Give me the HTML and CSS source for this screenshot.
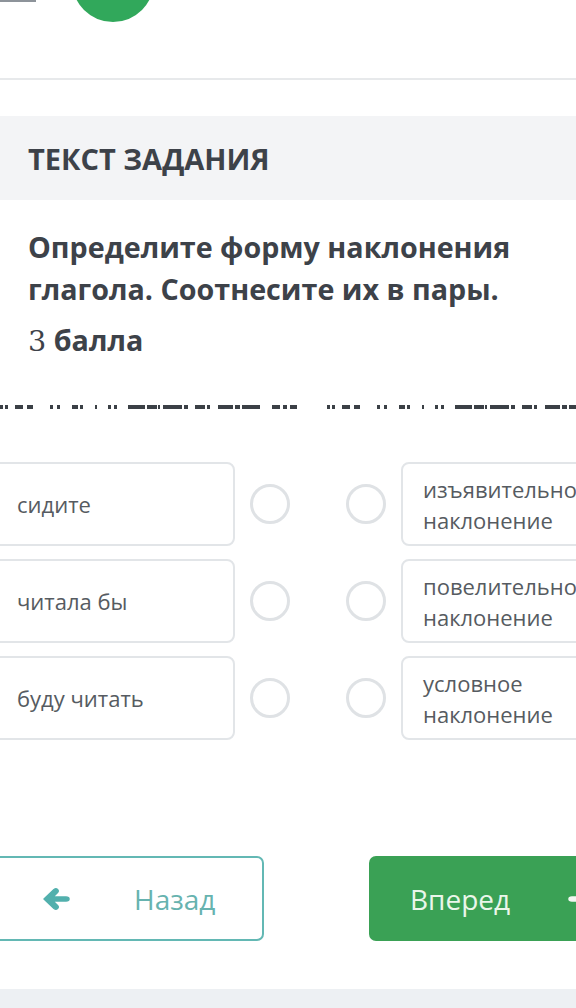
FILE: index.html
```html
<!DOCTYPE html>
<html lang="ru">
<head>
    <meta charset="UTF-8">
    <meta name="viewport" content="width=device-width, initial-scale=1.0">
    <title>Текст задания</title>
    <link rel="stylesheet" href="styles.css">
</head>
<body>
    <div class="topbar">
        <div class="back-stub"></div>
        <div class="avatar"></div>
    </div>

    <div class="task-head">ТЕКСТ ЗАДАНИЯ</div>

    <div class="task-body">
        <p class="question">Определите форму наклонения глагола. Соотнесите их в пары.</p>
        <p class="score"><span class="num">3</span> балла</p>
    </div>

    <!-- clipped line of the previous text, only the bottoms of letters are visible -->
    <svg class="cutline" width="576" height="5" viewBox="0 0 576 5">
        <g id="cut" fill="#3b4046">
            <rect x="0" y="0" width="3" height="4"/>
            <rect x="5" y="0" width="3" height="4"/>
            <rect x="15" y="0" width="8" height="4"/>
            <rect x="27" y="0" width="6" height="4"/>
            <rect x="50" y="0" width="3" height="4"/>
            <rect x="57" y="0" width="3" height="4"/>
            <rect x="72" y="0" width="6" height="4"/>
            <rect x="80" y="0" width="3" height="4"/>
            <rect x="95" y="0" width="2" height="4"/>
            <rect x="108" y="0" width="3" height="4"/>
            <rect x="114" y="0" width="3" height="4"/>
            <rect x="128" y="0" width="17" height="4"/>
            <rect x="147" y="0" width="10" height="4"/>
            <rect x="158" y="0" width="2" height="4"/>
            <rect x="163" y="0" width="19" height="4"/>
            <rect x="184" y="0" width="4" height="4"/>
            <rect x="195" y="0" width="10" height="4"/>
            <rect x="207" y="0" width="3" height="4"/>
            <rect x="218" y="0" width="15" height="4"/>
            <rect x="235" y="0" width="5" height="4"/>
            <rect x="242" y="0" width="18" height="4"/>
            <rect x="272" y="0" width="8" height="4"/>
            <rect x="283" y="0" width="4" height="4"/>
            <rect x="290" y="0" width="7" height="4"/>
        </g>
        <use href="#cut" x="327"/>
    </svg>

    <div class="match">
        <div class="match-row">
            <div class="card left">сидите</div>
            <span class="dot"></span>
            <span class="dot far"></span>
            <div class="card right"><span class="answer">изъявительное наклонение</span></div>
        </div>
        <div class="match-row">
            <div class="card left">читала бы</div>
            <span class="dot"></span>
            <span class="dot far"></span>
            <div class="card right"><span class="answer">повелительное наклонение</span></div>
        </div>
        <div class="match-row">
            <div class="card left">буду читать</div>
            <span class="dot"></span>
            <span class="dot far"></span>
            <div class="card right"><span class="answer">условное наклонение</span></div>
        </div>
    </div>

    <div class="nav">
        <button class="btn btn-back">
            <svg class="arrow" width="30" height="24" viewBox="0 0 30 24">
                <path d="M3 12 L13 2.5 Q15 1 16.5 2.5 Q18 4 16.5 5.5 L12 10 H25 Q28 10 28 12 Q28 14 25 14 H12 L16.5 18.5 Q18 20 16.5 21.5 Q15 23 13 21.5 Z" fill="#52b0ad" stroke="#52b0ad" stroke-width="1.5" stroke-linejoin="round"/>
            </svg>
            <span>Назад</span>
        </button>
        <button class="btn btn-next">
            <span>Вперед</span>
            <svg class="arrow" width="30" height="24" viewBox="0 0 30 24">
                <path d="M27 12 L17 2.5 Q15 1 13.5 2.5 Q12 4 13.5 5.5 L18 10 H5 Q2 10 2 12 Q2 14 5 14 H18 L13.5 18.5 Q12 20 13.5 21.5 Q15 23 17 21.5 Z" fill="#f2f7f2" stroke="#f2f7f2" stroke-width="1.5" stroke-linejoin="round"/>
            </svg>
        </button>
    </div>

    <div class="footer"></div>
</body>
</html>
```

FILE: styles.css
```css
body {
    margin: 0;
    width: 576px;
    height: 1008px;
    overflow: hidden;
    background-color: #fff;
    font-family: "Open Sans", "Noto Sans", sans-serif;
    color: #3d4249;
}

.topbar {
    height: 78px;
    display: flex;
    align-items: flex-start;
    border-bottom: 2px solid #e7e9eb;
}

.back-stub {
    width: 36px;
    height: 2px;
    background-color: #8d939a;
}

.avatar {
    width: 82px;
    height: 82px;
    margin-top: -60px;
    margin-left: 36px;
    border-radius: 50%;
    background-color: #31a85b;
}

.task-head {
    margin-top: 36px;
    height: 84px;
    display: flex;
    align-items: center;
    padding-left: 28px;
    background-color: #f3f4f6;
    font-size: 29px;
    font-weight: 700;
}

.task-body {
    padding: 26px 28px 0;
}

.question {
    margin: 0;
    font-size: 28.7px;
    font-weight: 700;
    line-height: 42px;
}

.score {
    margin: 9px 0 0;
    font-size: 28.7px;
    font-weight: 700;
    line-height: 42px;
}

.score .num {
    font-family: "DejaVu Serif", "Liberation Serif", serif;
    font-weight: 400;
}

.cutline {
    display: block;
    margin-top: 43px;
}

.match {
    margin-top: 52px;
    margin-left: -20px;
    display: flex;
    flex-direction: column;
    gap: 13px;
}

.match-row {
    display: flex;
    align-items: center;
}

.card {
    height: 84px;
    box-sizing: border-box;
    border: 2px solid #e2e5e8;
    border-radius: 8px;
    font-size: 22px;
    line-height: 31px;
    color: #565b61;
    flex-shrink: 0;
}

.card.left {
    width: 255px;
    padding-left: 35px;
    display: flex;
    align-items: center;
}

.card.right {
    width: 220px;
    margin-left: 15px;
    padding: 10px 0 0 20px;
}

.answer {
    display: block;
    width: 150px;
}

.dot {
    width: 40px;
    height: 40px;
    box-sizing: border-box;
    border: 3px solid #dfe2e5;
    border-radius: 50%;
    margin-left: 15px;
    flex-shrink: 0;
}

.dot.far {
    margin-left: 56px;
}

.nav {
    margin-top: 116px;
    display: flex;
    align-items: center;
}

.btn {
    height: 85px;
    box-sizing: border-box;
    border-radius: 7px;
    display: flex;
    align-items: center;
    font-family: "Open Sans", "Noto Sans", sans-serif;
    font-size: 28px;
    padding: 0;
    flex-shrink: 0;
}

.btn-back {
    width: 284px;
    margin-left: -20px;
    border: 2px solid #63b8b4;
    background-color: #fff;
    color: #67b3af;
    padding-left: 59px;
}

.btn-back span {
    margin-left: 63px;
}

.btn-next {
    width: 240px;
    margin-left: 105px;
    border: none;
    background-color: #3aa155;
    color: #eaf6ea;
    padding-left: 41px;
}

.btn-next .arrow {
    margin-left: 57px;
}

.footer {
    margin-top: 48px;
    height: 20px;
    background-color: #edf0f3;
}
```
